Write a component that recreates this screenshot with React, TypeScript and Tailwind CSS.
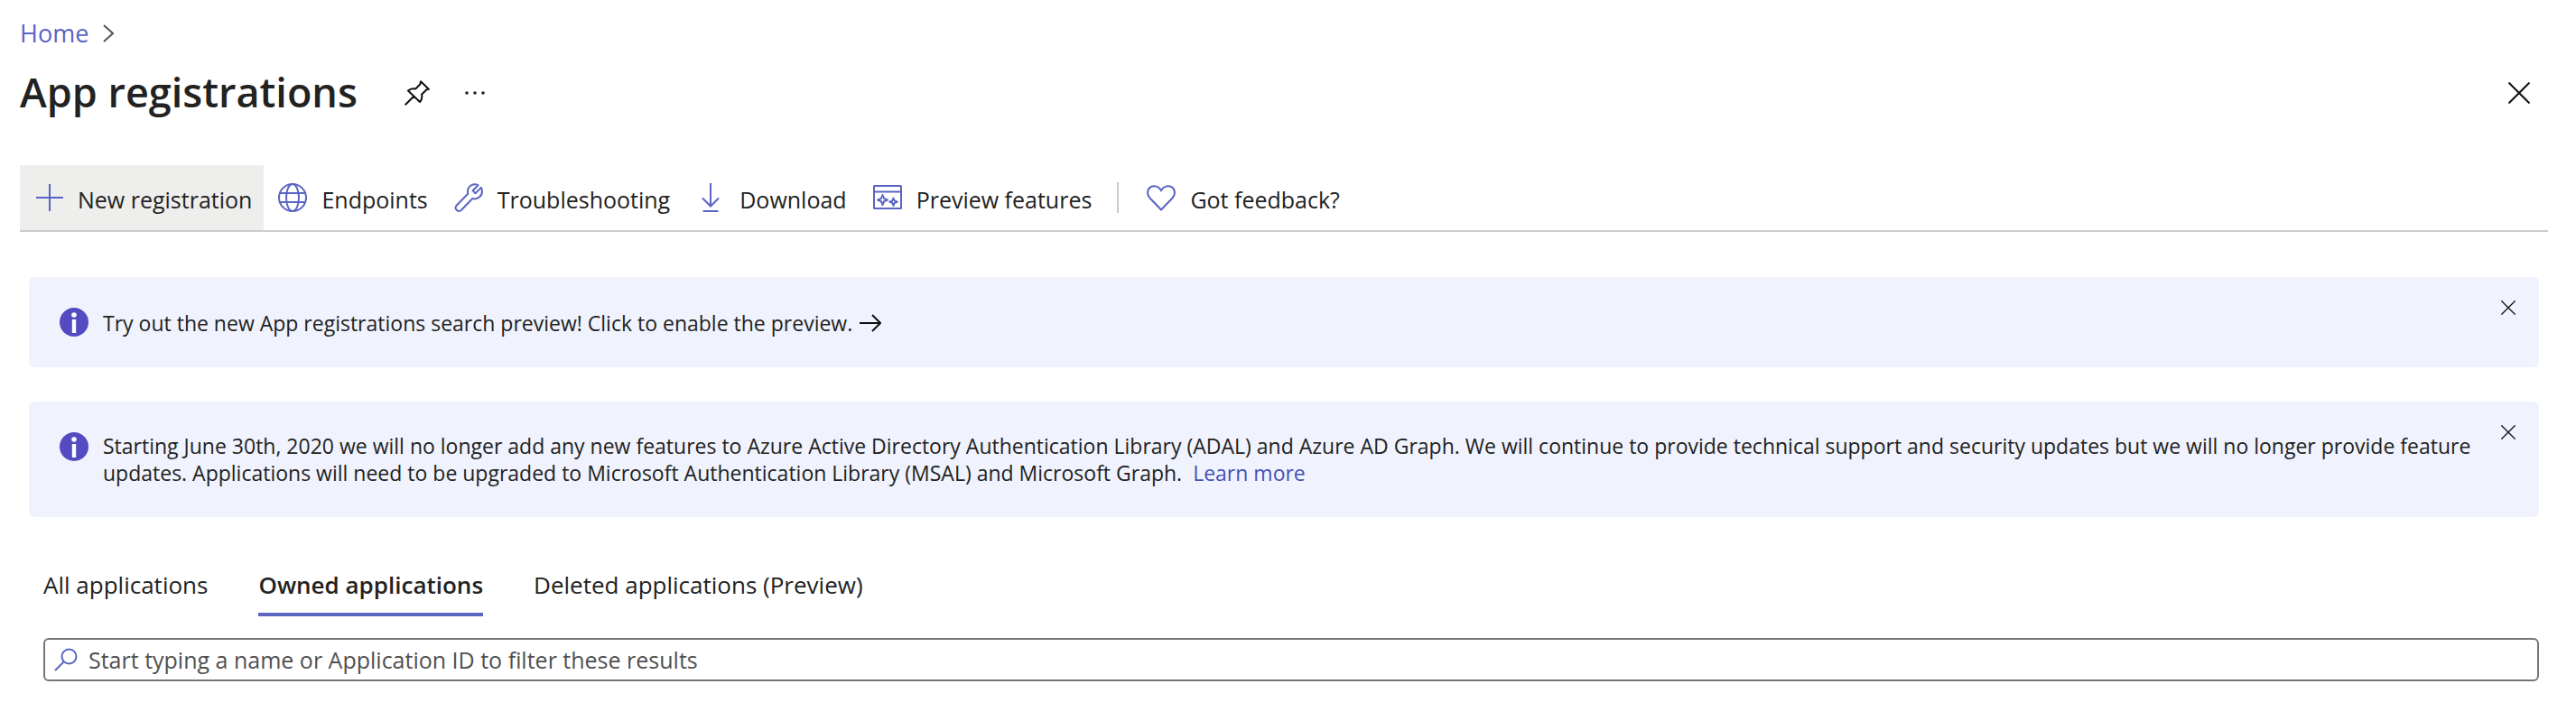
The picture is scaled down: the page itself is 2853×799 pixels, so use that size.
import React from 'react';

const iconBase = {
  viewBox: '0 0 32 32',
  fill: 'none',
  stroke: 'currentColor',
  strokeWidth: 2,
  'aria-hidden': true,
} as const;

const PlusIcon = () => (
  <svg {...iconBase} className="size-8 shrink-0">
    <path d="M17 1v30M2 16h30" />
  </svg>
);

const GlobeIcon = () => (
  <svg {...iconBase} className="size-8 shrink-0">
    <circle cx="16" cy="16" r="15" />
    <ellipse cx="16" cy="16" rx="7" ry="15" />
    <path d="M2 11h28M2 21h28" />
  </svg>
);

const WrenchIcon = () => (
  <svg {...iconBase} className="size-8 shrink-0" strokeLinejoin="round">
    <path d="M26.5 2.2C21.5-.3 15 3 15 9.200c0 1.100.1 1.700.3 2.600L2.500 24.800a3.700 3.700 0 0 0 5.200 5.200L20.300 17c5.700 1.700 11.500-3 10.500-9.200-.1-1.100-.4-1.900-.9-2.900L23.500 11.200l-2.900-2.900z" />
  </svg>
);

const DownloadIcon = () => (
  <svg {...iconBase} className="size-8 shrink-0">
    <path d="M16 0v25M7 16.500l9 9 9-9M7.500 31h17" />
  </svg>
);

const PreviewIcon = () => (
  <svg {...iconBase} className="size-8 shrink-0" strokeLinejoin="round">
    <rect x="1" y="3" width="30" height="25" rx="0.500" />
    <path d="M1 9.500h30" />
    <path d="M10.500 13l1.600 4 4 1.600-4 1.600-1.600 4-1.600-4-4-1.600 4-1.600zM22.500 16.500l1.200 3 3 1.200-3 1.200-1.200 3-1.200-3-3-1.200 3-1.200z" />
  </svg>
);

const HeartIcon = () => (
  <svg {...iconBase} className="size-8 shrink-0">
    <path d="M16 29.500L3.300 16.200C-.2 12.300.6 6.500 4.500 4.200 8.500 2 13.500 3.500 16 8c2.500-4.500 7.500-6 11.500-3.800 3.900 2.300 4.700 8.100 1.200 12z" />
  </svg>
);

const InfoIcon = () => (
  <svg viewBox="0 0 32 32" className="size-8 shrink-0" aria-hidden="true">
    <circle cx="16" cy="16" r="16" fill="#544bc2" />
    <circle cx="16" cy="8" r="2.800" fill="#fff" />
    <rect x="13.800" y="13" width="4.400" height="15" fill="#fff" />
  </svg>
);

const CloseIcon = ({ className }: { className: string }) => (
  <svg viewBox="0 0 24 24" className={className} fill="none" stroke="#111" aria-hidden="true">
    <path d="M.5.500l23 23M23.500.500l-23 23" strokeWidth="2" />
  </svg>
);

const commands = [
  { label: 'New registration', Icon: PlusIcon, active: true },
  { label: 'Endpoints', Icon: GlobeIcon },
  { label: 'Troubleshooting', Icon: WrenchIcon },
  { label: 'Download', Icon: DownloadIcon },
  { label: 'Preview features', Icon: PreviewIcon },
];

function Command({ label, Icon, active }: { label: string; Icon: () => React.JSX.Element; active?: boolean }) {
  return (
    <button
      type="button"
      className={`flex h-[72px] items-center gap-4 pr-[13px] pl-4 whitespace-nowrap ${active ? 'bg-[#eeeeed]' : ''}`}
    >
      <span className="text-[#5a64c4]">
        <Icon />
      </span>
      <span className="pt-1">{label}</span>
    </button>
  );
}

function Banner({ children }: { children: React.ReactNode }) {
  return (
    <section className="flex items-start rounded-md bg-[#f0f3fd] pt-[34px] pr-[26px] pb-8 pl-[34px]">
      <InfoIcon />
      <p className="flex-1 pr-5 pb-0.5 pl-4 text-[23px] leading-[30px]">{children}</p>
      <button type="button" aria-label="Dismiss" className="-mt-2">
        <CloseIcon className="size-4" />
      </button>
    </section>
  );
}

export default function App() {
  return (
    <main className="bg-white pt-[15px] pr-[31px] pb-11 pl-[22px] font-['Open_Sans',sans-serif] text-[25px] leading-9 text-[#222]">
      <nav aria-label="Breadcrumb" className="flex h-11 items-center gap-4 text-[27px]">
        <a href="#home" className="text-[#5a64c4]">Home</a>
        <svg viewBox="0 0 12 20" className="h-5 w-3" fill="none" stroke="#555" strokeWidth="2" aria-hidden="true">
          <path d="M1 1l10 9-10 9" />
        </svg>
      </nav>

      <header className="mt-0.5 flex h-[84px] items-center pr-5">
        <h1 className="pb-0.5 text-[45px] leading-[60px] font-semibold">App registrations</h1>
        <button type="button" aria-label="Pin" className="ml-[52px]">
          <svg viewBox="0 0 28 28" className="size-7" fill="none" stroke="#111" strokeWidth="2" strokeLinejoin="round" aria-hidden="true">
            <path d="M18 1.200l8.800 8.600-2.600.7-5.200 5.200c.8 3.200.2 6-2 8.300L4 11.500c2.200-2.200 5-2.700 8.200-2l5.200-5.200zM10.500 17.500L.7 27.300" />
          </svg>
        </button>
        <button type="button" aria-label="More" className="ml-9">
          <svg viewBox="0 0 28 28" className="size-7" fill="#222" aria-hidden="true">
            <circle cx="5" cy="14" r="1.800" />
            <circle cx="14" cy="14" r="1.800" />
            <circle cx="23" cy="14" r="1.800" />
          </svg>
        </button>
        <button type="button" aria-label="Close" className="ml-auto">
          <CloseIcon className="size-6" />
        </button>
      </header>

      <div role="toolbar" aria-label="Commands" className="mt-[38px] flex items-center border-b-2 border-[#ccc]">
        {commands.map((c) => (
          <Command key={c.label} {...c} />
        ))}
        <span className="mx-[15px] h-[34px] w-0.5 bg-[#c8c8c8]" />
        <Command label="Got feedback?" Icon={HeartIcon} />
      </div>

      <div className="mt-[50px] ml-[10px] flex flex-col gap-[38px] pr-2.5">
        <Banner>
          <a href="#preview" className="flex items-center gap-2 pt-0.5">
            Try out the new App registrations search preview! Click to enable the preview.
            <svg viewBox="0 0 24 20" className="h-5 w-6" fill="none" stroke="#111" strokeWidth="2" aria-hidden="true">
              <path d="M0 10h23M14 1l9 9-9 9" />
            </svg>
          </a>
        </Banner>
        <Banner>
          Starting June 30th, 2020 we will no longer add any new features to Azure Active Directory Authentication
          Library (ADAL) and Azure AD Graph. We will continue to provide technical support and security updates but we
          will no longer provide feature updates. Applications will need to be upgraded to Microsoft Authentication
          Library (MSAL) and Microsoft Graph.{' '}
          <a href="#learn" className="ml-1.5 inline-block text-[#4450b5]">Learn more</a>
        </Banner>
      </div>

      <div role="tablist" className="mt-[57px] ml-[26px] flex gap-14 text-[26px]">
        <button type="button" role="tab" aria-selected="false" className="border-b-4 border-transparent pb-[13px]">
          All applications
        </button>
        <button type="button" role="tab" aria-selected="true" className="border-b-4 border-[#5d66c2] pb-[13px] font-semibold">
          Owned applications
        </button>
        <button type="button" role="tab" aria-selected="false" className="border-b-4 border-transparent pb-[13px]">
          Deleted applications (Preview)
        </button>
      </div>

      <label className="mt-6 mr-2.5 ml-[26px] flex h-12 items-center gap-3 rounded-md border-2 border-[#767676] px-2.5">
        <svg viewBox="0 0 26 26" className="size-[26px] shrink-0" fill="none" stroke="#5a64c4" strokeWidth="2" aria-hidden="true">
          <circle cx="16.500" cy="9.500" r="8" />
          <path d="M11 15L1 25" />
        </svg>
        <input
          type="text"
          aria-label="Filter applications"
          placeholder="Start typing a name or Application ID to filter these results"
          className="h-full min-w-0 flex-1 bg-transparent outline-none placeholder:text-[#505050]"
        />
      </label>
    </main>
  );
}
